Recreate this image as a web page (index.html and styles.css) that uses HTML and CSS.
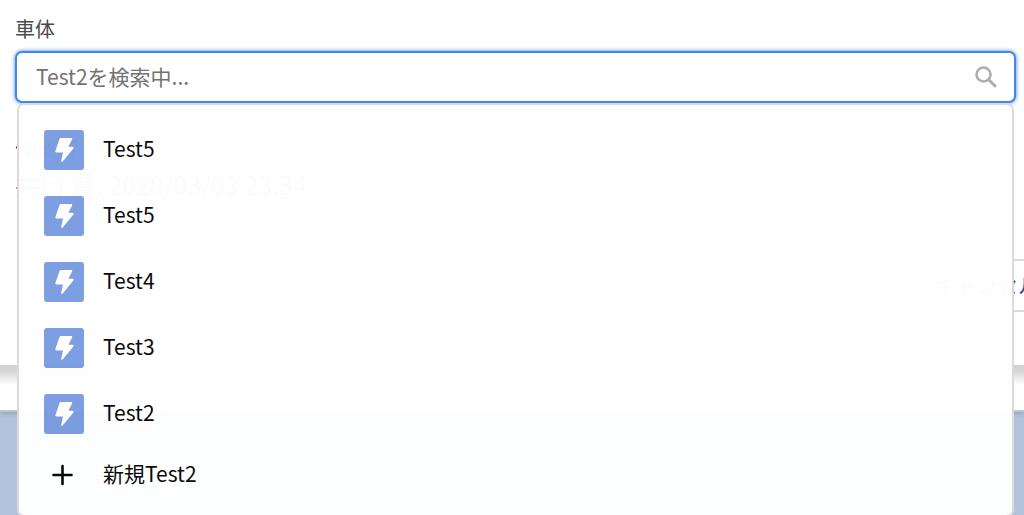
FILE: index.html
```html
<!DOCTYPE html>
<html lang="ja">
<head>
  <meta charset="UTF-8" />
  <meta name="viewport" content="width=device-width, initial-scale=1.0"/>
  <title>Test2を検索中</title>
  <link rel="stylesheet" href="styles.css">
</head>
<body>

  <svg class="sprite" aria-hidden="true">
    <symbol id="bolt" viewBox="0 0 40 40">
      <path d="M16.800 8h10.400c.9 0 1.300.7.9 1.500L24.400 16.800h4.300c1 0 1.300.9.7 1.600L18.700 31.400c-.7.8-1.700.4-1.500-.6L19 22.400h-6.600c-.9 0-1.300-.7-1-1.400L15.600 8.800c.2-.5.600-.8 1.200-.8z" fill="#fff"/>
    </symbol>
  </svg>

  <main class="modal">
    <div class="lookup">
      <label class="lookup-label" for="lookup">車体</label>
      <div class="lookup-field">
        <input class="lookup-input" id="lookup" type="text" placeholder="Test2を検索中..." autocomplete="off">
        <svg class="search-icon" viewBox="0 0 22 22" aria-hidden="true">
          <circle cx="8.500" cy="8.500" r="7" fill="none" stroke="#b0adab" stroke-width="2.600"/>
          <path d="M14 14l6 6" stroke="#b0adab" stroke-width="3" stroke-linecap="round"/>
        </svg>

        <div class="dropdown">
          <ul class="options">
            <li><button class="option" type="button"><svg class="option-icon"><use href="#bolt"/></svg><span class="option-text">Test5</span></button></li>
            <li><button class="option" type="button"><svg class="option-icon"><use href="#bolt"/></svg><span class="option-text">Test5</span></button></li>
            <li><button class="option" type="button"><svg class="option-icon"><use href="#bolt"/></svg><span class="option-text">Test4</span></button></li>
            <li><button class="option" type="button"><svg class="option-icon"><use href="#bolt"/></svg><span class="option-text">Test3</span></button></li>
            <li><button class="option" type="button"><svg class="option-icon"><use href="#bolt"/></svg><span class="option-text">Test2</span></button></li>
            <li>
              <button class="option option-new" type="button">
                <svg class="plus-icon" viewBox="0 0 40 40"><path d="M18.500 11v18M9.500 20h18" stroke="#080707" stroke-width="2.600" stroke-linecap="round"/></svg>
                <span class="option-text">新規Test2</span>
              </button>
            </li>
          </ul>
        </div>
      </div>
    </div>

    <dl class="record-info">
      <dt>作成者</dt>
      <dd>井口 賢, 2020/03/03 23:34</dd>
    </dl>

    <div class="modal-footer">
      <button class="cancel" type="button">キャンセル</button>
    </div>
  </main>

  <div class="card-end"></div>

</body>
</html>
```

FILE: styles.css
```css
* {
  box-sizing: border-box;
}

html, body {
  margin: 0;
  padding: 0;
}

body {
  height: 100vh;
  overflow: hidden;
  font-family: "Noto Sans CJK JP", sans-serif;
  font-size: 21px;
  color: #080707;
  background: #b2c3de;
}

button, input {
  font: inherit;
  color: inherit;
}

.sprite {
  display: none;
}

.modal {
  position: relative;
  padding: 15px 0 53px 15px;
  background: #fff;
}

/* Lookup field */
.lookup {
  padding-right: 8px;
}

.lookup-label {
  display: block;
  margin-bottom: 8px;
  font-size: 20px;
  line-height: 28px;
  color: #4a4a48;
}

.lookup-field {
  position: relative;
}

.lookup-input {
  display: block;
  width: 100%;
  height: 52px;
  padding: 0 56px 3px 19px;
  border: 2px solid #4287e9;
  border-radius: 7px;
  outline: none;
  background: #fff;
  box-shadow: 0 0 4px #4287e9;
}

.lookup-input::placeholder {
  color: #747270;
  opacity: 1;
}

.search-icon {
  position: absolute;
  top: 15px;
  right: 19px;
  width: 22px;
  height: 22px;
}

/* Suggestion list */
.dropdown {
  position: absolute;
  z-index: 1;
  top: 100%;
  left: 2px;
  right: 2px;
  padding: 12px 0;
  border: 2px solid #dddbda;
  border-radius: 7px;
  background: #fff;
  opacity: 0.985;
}

.options {
  margin: 0;
  padding: 0;
  list-style: none;
}

.option {
  display: flex;
  align-items: center;
  gap: 19px;
  width: 100%;
  height: 66px;
  padding: 0 25px;
  border: none;
  background: none;
  text-align: left;
  cursor: pointer;
}

.option-icon {
  width: 40px;
  height: 40px;
  border-radius: 3px;
  background: #7b9de0;
}

.option-text {
  padding-bottom: 4px;
}

.option-new {
  height: 56px;
}

.plus-icon {
  width: 40px;
  height: 40px;
}

/* Created by */
.record-info {
  margin: 26px 0 56px;
  line-height: 37px;
  color: #3e3e3c;
}

.record-info dd {
  margin: 0;
  font-size: 25px;
}

/* Buttons run past the right edge of the window */
.modal-footer {
  display: flex;
  justify-content: flex-end;
  overflow: hidden;
}

.cancel {
  height: 53px;
  margin-right: -37px;
  padding: 0 20px 4px;
  border: 2px solid #dddbda;
  border-radius: 6px;
  background: #fff;
  color: #1b4f9c;
  white-space: nowrap;
}

.card-end {
  height: 47px;
  border-bottom: 2px solid #c4c4c6;
  background: linear-gradient(#d2d2d2 0, #d6d6d6 6px, #fff 20px);
  box-shadow: 0 2px 4px rgba(0, 0, 0, 0.15);
}
```
